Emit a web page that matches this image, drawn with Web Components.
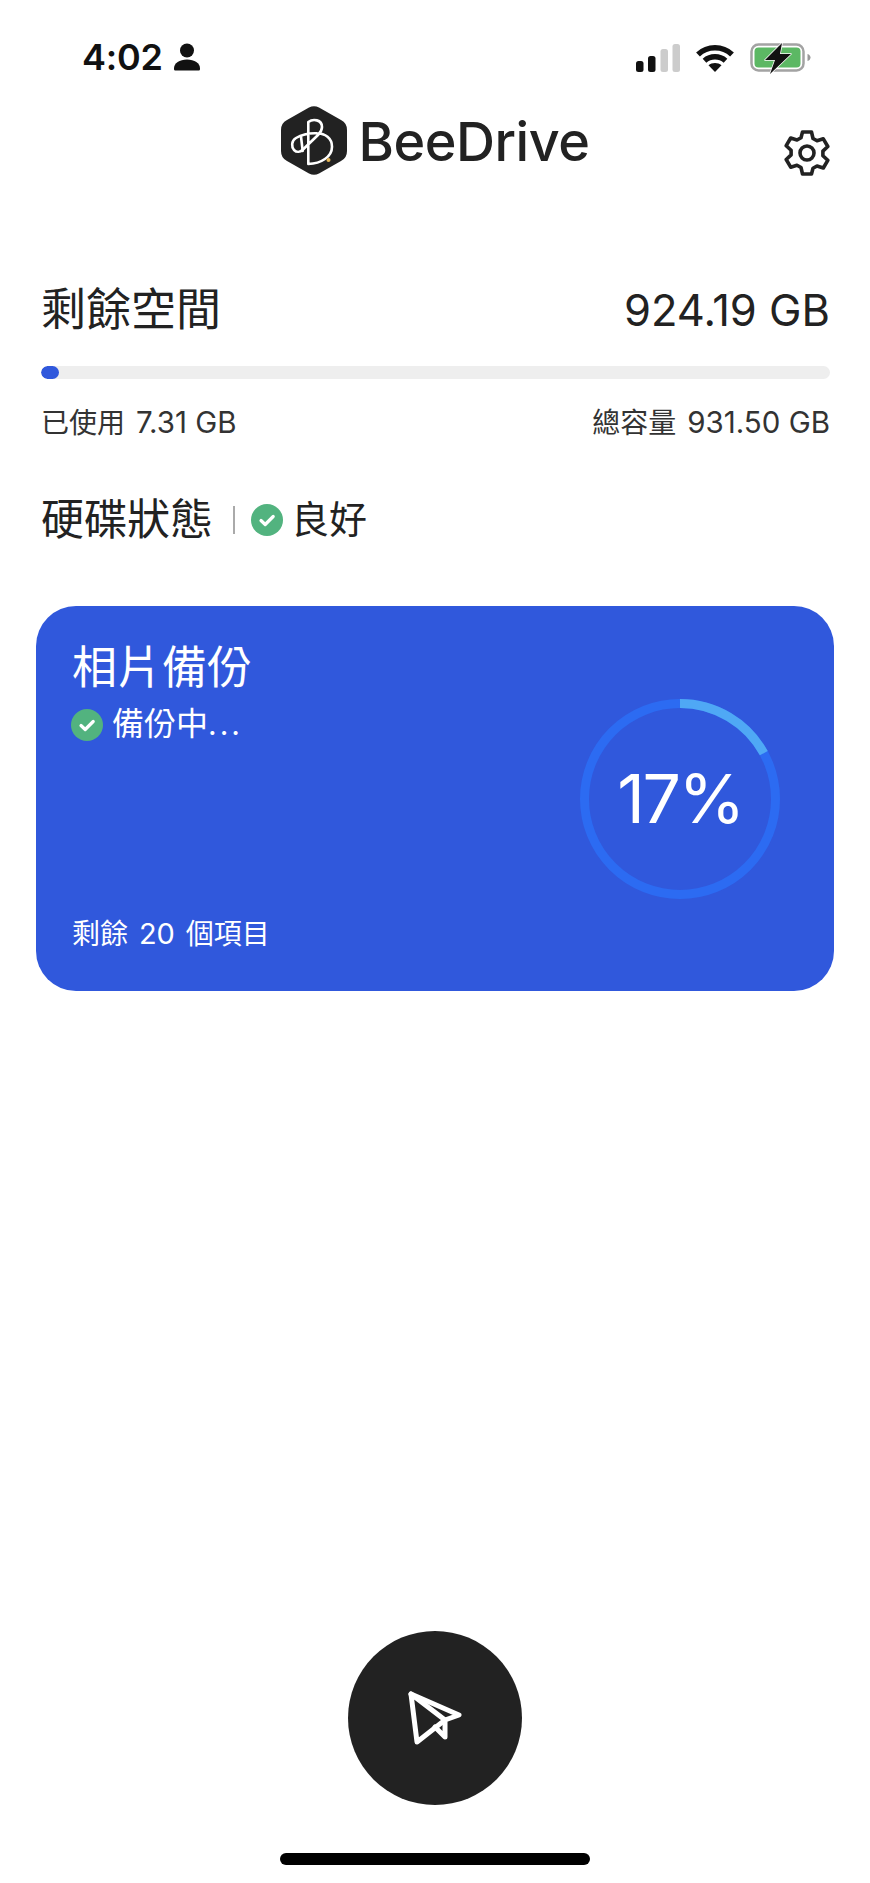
<!DOCTYPE html>
<html lang="zh-Hant">
<head>
<meta charset="utf-8">
<title>BeeDrive</title>
<style>
  html, body { margin: 0; padding: 0; background: #fff; }
  body { font-family: Inter, "Noto Sans CJK TC", sans-serif; color: #222; }
</style>
</head>
<body>
<app-screen>
  <status-bar time="4:02"></status-bar>
  <app-header></app-header>
  <storage-summary free="924.19 GB" used="7.31 GB" total="931.50 GB" percent="2.3"></storage-summary>
  <disk-status state="良好"></disk-status>
  <backup-card title="相片備份" state="備份中" remaining-count="20" percent="17"></backup-card>
  <send-button></send-button>
  <home-indicator></home-indicator>
</app-screen>

<script>
  /**
   * Creates a custom element class whose shadow root is built from a render function.
   * @param {string} name - Tag name
   * @param {(el: HTMLElement) => string} render - Returns the shadow root HTML
   */
  const defineElement = (name, render) => {
    customElements.define(name, class extends HTMLElement {
      constructor() {
        super();
        this.attachShadow({ mode: "open" });
      }
      connectedCallback() {
        this.shadowRoot.innerHTML = render(this);
      }
    });
  };

  const CHECK_BADGE = (size, nudge) => `
    <svg width="${size}" height="${size}" viewBox="0 0 32 32" style="flex:none;display:block;margin-top:${nudge}px">
      <circle cx="16" cy="16" r="16" fill="#52b37f"/>
      <path d="M10 16.5l4.2 4L22.2 12.5" fill="none" stroke="#fff" stroke-width="3.2" stroke-linecap="round" stroke-linejoin="round"/>
    </svg>`;

  defineElement("app-screen", () => `
    <style>
      :host { display: flex; flex-direction: column; height: 1883px; overflow: hidden; }
      ::slotted(send-button) { margin-top: auto; }
    </style>
    <slot></slot>`);

  defineElement("status-bar", (el) => `
    <style>
      :host { display: flex; align-items: flex-start; justify-content: space-between; padding: 43px 58px 0 82px; height: 62px; }
      .left { display: flex; align-items: center; gap: 11px; height: 30px; margin-top: -1px; }
      .time { font-size: 36px; font-weight: 600; line-height: 30px; color: #111; letter-spacing: -.2px; }
      .right { display: flex; align-items: flex-start; gap: 16px; }
      .signal, .wifi { margin-top: 1px; }
      svg { display: block; }
    </style>
    <div class="left">
      <span class="time">${el.getAttribute("time")}</span>
      <svg width="26" height="28" viewBox="0 0 26 28">
        <circle cx="13" cy="7.5" r="7" fill="#111"/>
        <path d="M1 27.5c-1 0-1-1.2-1-2.2C0 20 5.5 16.5 13 16.5S26 20 26 25.3c0 1 0 2.2-1 2.2z" fill="#111"/>
      </svg>
    </div>
    <div class="right">
      <svg class="signal" width="44" height="29" viewBox="0 0 44 29">
        <rect x="0" y="17" width="7.5" height="11" rx="2.5" fill="#111"/>
        <rect x="12" y="12" width="7.5" height="16" rx="2.5" fill="#111"/>
        <rect x="24.5" y="5" width="7.5" height="23" rx="2.5" fill="#ccc"/>
        <rect x="36.5" y="0" width="7.5" height="28" rx="2.5" fill="#ccc"/>
      </svg>
      <svg class="wifi" width="38" height="29" viewBox="0 0 38 29" fill="none" stroke="#111" stroke-width="5.5">
        <path d="M2 10.5C11.5 1.5 26.5 1.5 36 10.5"/>
        <path d="M8.5 16.8C14.5 11.5 23.5 11.5 29.5 16.8"/>
        <path d="M19 28l-6.5-6.7c3.5-3 9.5-3 13 0z" fill="#111" stroke="none"/>
      </svg>
      <svg width="62" height="32" viewBox="0 0 62 32">
        <rect x="1.5" y="1.5" width="52" height="26" rx="7" fill="#fff" stroke="#a3a3a3" stroke-width="2.5"/>
        <rect x="4.5" y="4.5" width="46" height="20" rx="4" fill="#5cb864"/>
        <path d="M57.5 11c2 .5 3 2 3 3.5s-1 3-3 3.5z" fill="#999"/>
        <path d="M32 0L15 17h10l-5 14L41 11H30z" fill="#111" stroke="#fff" stroke-width="1.5" stroke-linejoin="round" paint-order="stroke"/>
      </svg>
    </div>`);

  defineElement("app-header", () => `
    <style>
      :host { display: grid; grid-template-columns: 1fr auto 1fr; height: 71px; align-items: start; }
      .brand { grid-column: 2; display: flex; align-items: center; gap: 12px; height: 71px; }
      .name { font-size: 54px; font-weight: 500; line-height: 71px; color: #222; letter-spacing: -.5px; margin-top: 1px; }
      .gear { grid-column: 3; justify-self: end; margin: 25px 40px 0 0; display: block; }
      .logo { display: block; }
    </style>
    <div class="brand">
      <svg class="logo" width="66" height="71" viewBox="0 0 66 71">
        <path d="M28 2.5Q33 0 38 2.5L60 15Q66 18 66 25V46Q66 53 60 56L38 68.5Q33 71 28 68.5L6 56Q0 53 0 46V25Q0 18 6 15Z" fill="#222"/>
        <g fill="none" stroke="#fff" stroke-width="2.6" stroke-linejoin="round" stroke-linecap="round">
          <path d="M27.3 17V59C40 58.5 51 52 51 41.7 51 33 44 28.5 36 28.3 30 28 21 29.5 15 33 10 36 10.5 42 13 45 15.5 47.5 19 47.5 22 44.5L37 30C40 27 41 25 41 22 41 14.5 32 13.5 27.3 17Z"/>
          <path d="M20 31.5L21.7 46"/>
        </g>
        <circle cx="47.5" cy="55" r="2" fill="#e6b656"/>
      </svg>
      <span class="name">BeeDrive</span>
    </div>
    <svg class="gear" width="46" height="46" viewBox="0 0 46 46" fill="none" stroke="#222" stroke-width="3.6" stroke-linejoin="round">
      <path d="M18.5 2h9l1.5 6.5 4 2.3 6.3-2 4.5 7.7-4.9 4.6v4.6l4.9 4.6-4.5 7.7-6.3-2-4 2.3L27.5 44h-9L17 37.5l-4-2.3-6.3 2-4.5-7.7 4.9-4.6v-4.6L2.2 15.7 6.7 8l6.3 2 4-2.3z"/>
      <circle cx="23" cy="23" r="7"/>
    </svg>`);

  defineElement("storage-summary", (el) => `
    <style>
      :host { display: block; padding: 0 40px 0 41px; margin-top: 104px; }
      .top, .bottom { display: flex; justify-content: space-between; align-items: center; }
      .top { font-size: 45px; line-height: 60px; color: #222; }
      .free { font-size: 43.5px; }
      .track { margin-top: 26px; height: 13px; border-radius: 7px; background: #eee; overflow: hidden; }
      .fill { width: ${el.getAttribute("percent")}%; height: 100%; background: #3058dc; border-radius: 7px; }
      .bottom { margin-top: 23px; font-size: 28px; line-height: 40px; color: #333; }
      .value { font-size: 29.5px; margin-left: 11px; }
    </style>
    <div class="top"><span>剩餘空間</span><span class="free">${el.getAttribute("free")}</span></div>
    <div class="track"><div class="fill"></div></div>
    <div class="bottom">
      <span>已使用<span class="value">${el.getAttribute("used")}</span></span>
      <span>總容量<span class="value">${el.getAttribute("total")}</span></span>
    </div>`);

  defineElement("disk-status", (el) => `
    <style>
      :host { display: flex; align-items: center; padding-left: 41px; margin-top: 43px; height: 60px; font-size: 43px; color: #222; }
      .sep { width: 2px; height: 28px; background: #aaa; margin: 8px 16px 0 20px; }
      .state { font-size: 38px; margin-left: 8px; }
    </style>
    <span>硬碟狀態</span><span class="sep"></span>${CHECK_BADGE(32, 8)}<span class="state">${el.getAttribute("state")}</span>`);

  defineElement("backup-card", (el) => `
    <style>
      :host { display: flex; justify-content: space-between; margin: 60px 36px 0; height: 385px; box-sizing: border-box; padding: 34px 54px 0 36px; background: #3058dc; border-radius: 40px; color: #fff; }
      .text { display: flex; flex-direction: column; height: 314px; }
      .title { font-size: 45px; line-height: 56px; }
      .state { display: flex; align-items: center; gap: 9px; font-size: 32px; line-height: 44px; margin-left: -1px; margin-top: 6px; }
      .dots { letter-spacing: 3px; font-size: 30px; }
      .remaining { margin-top: auto; font-size: 28px; line-height: 40px; word-spacing: 3px; }
      .count { font-size: 29px; }
    </style>
    <div class="text">
      <div class="title">${el.getAttribute("title")}</div>
      <div class="state">${CHECK_BADGE(32, 2)}<span>${el.getAttribute("state")}<span class="dots">...</span></span></div>
      <div class="remaining">剩餘 <span class="count">${el.getAttribute("remaining-count")}</span> 個項目</div>
    </div>
    <progress-ring percent="${el.getAttribute("percent")}"></progress-ring>`);

  defineElement("progress-ring", (el) => {
    const percent = Number(el.getAttribute("percent"));
    const r = 95.5;
    const length = 2 * Math.PI * r;
    return `
    <style>
      :host { display: grid; place-items: center; position: relative; width: 200px; height: 200px; margin-top: 59px; }
      svg { position: absolute; inset: 0; }
      span { font-size: 68px; font-weight: 400; letter-spacing: -2.5px; margin-bottom: 2px; }
    </style>
    <svg width="200" height="200" viewBox="0 0 200 200" fill="none" stroke-width="9">
      <circle cx="100" cy="100" r="${r}" stroke="#2c6bf2"/>
      <circle cx="100" cy="100" r="${r}" stroke="#4fa8f5" stroke-dasharray="${length * percent / 100} ${length}" transform="rotate(-90 100 100)"/>
    </svg>
    <span>${percent}%</span>`;
  });

  defineElement("send-button", () => `
    <style>
      :host { display: grid; place-items: center; width: 174px; height: 174px; border-radius: 50%; background: #222; align-self: center; }
      svg { display: block; }
    </style>
    <svg width="54" height="54" viewBox="0 0 54 54" fill="none" stroke="#fff" stroke-width="5" stroke-linejoin="round" stroke-linecap="round">
      <path d="M3 3L51 24 37 29 V46 L27 36"/>
      <path d="M3 3L9 51 37 29 3 3Z"/>
    </svg>`);

  defineElement("home-indicator", () => `
    <style>
      :host { display: block; width: 310px; height: 12px; margin: 48px auto 18px; border-radius: 6px; background: #000; }
    </style>`);
</script>
</body>
</html>
